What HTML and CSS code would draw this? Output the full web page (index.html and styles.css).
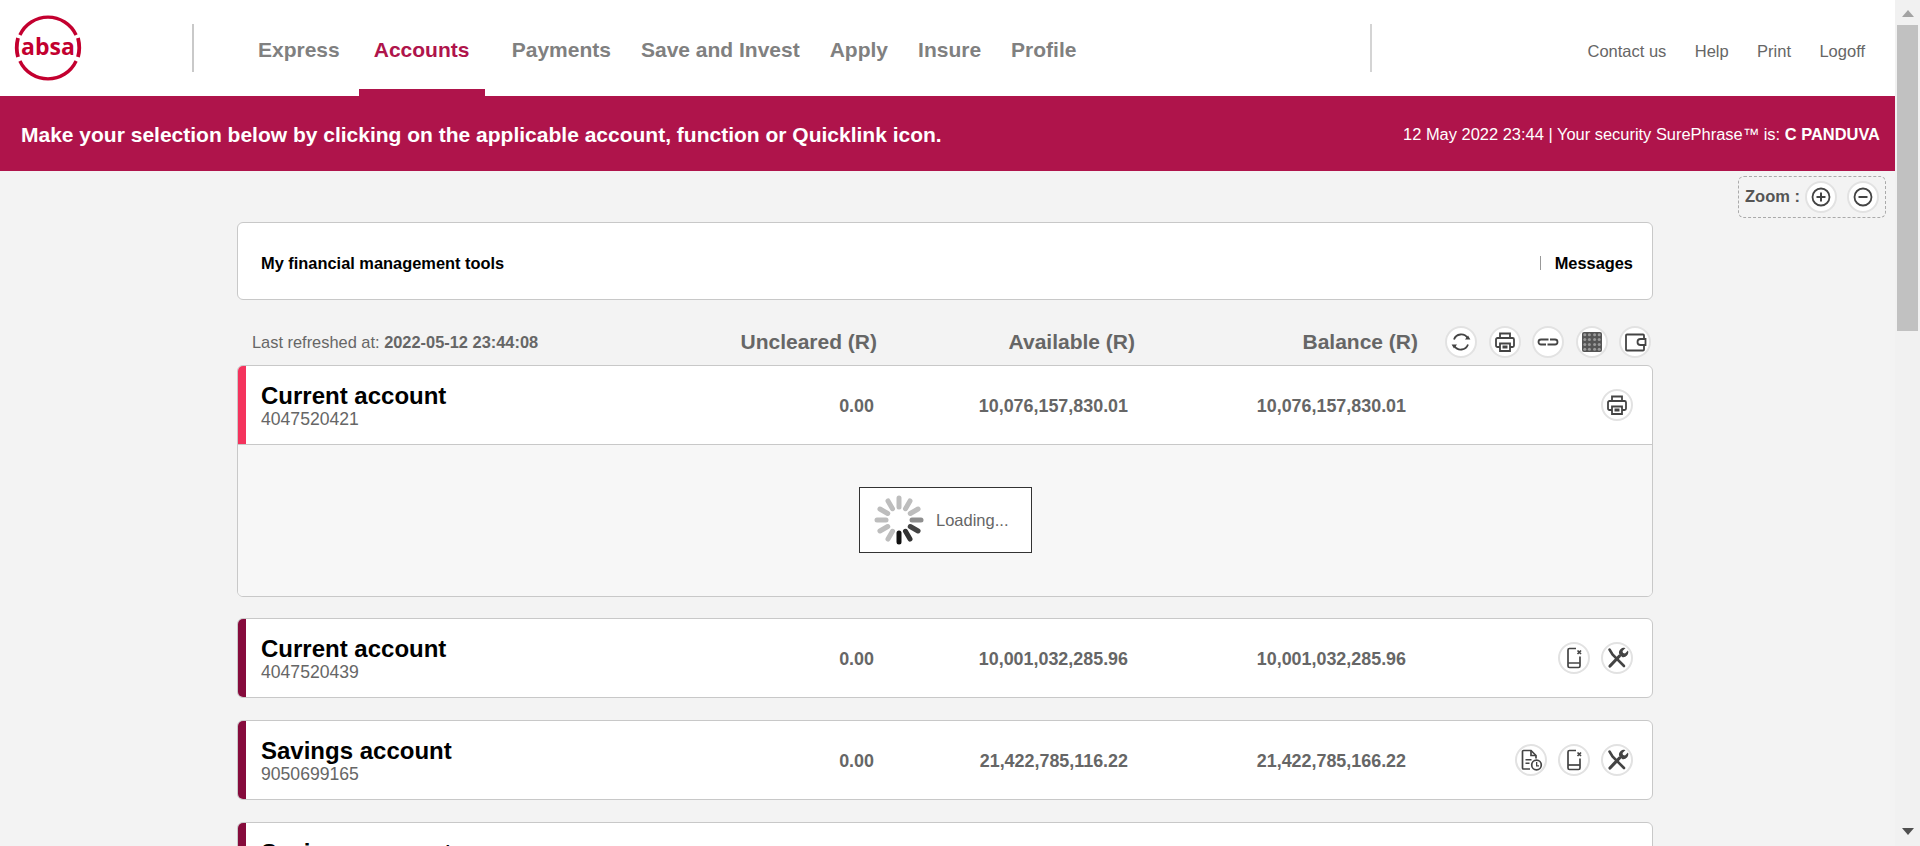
FILE: index.html
```html
<!DOCTYPE html>
<html lang="en">
<head>
<meta charset="utf-8">
<title>Absa Online</title>
<link rel="stylesheet" href="styles.css">
</head>
<body>
<svg class="sprite" aria-hidden="true">
  <symbol id="i-refresh" viewBox="0 0 24 24"><path d="M5 9.5A7.6 7.6 0 0 1 18.6 8M19 14.5A7.6 7.6 0 0 1 5.4 16" fill="none" stroke="currentColor" stroke-width="1.8"/><path d="M16 9.4h5.4L19 5.6zM8 14.6H2.6L5 18.4z" fill="currentColor"/></symbol>
  <symbol id="i-print" viewBox="0 0 24 24"><g fill="none" stroke="currentColor" stroke-width="1.8"><path d="M7 8V3.5h10V8"/><path d="M7 17H4.5A1.5 1.5 0 0 1 3 15.500V9.500A1.500 1.500 0 0 1 4.500 8h15A1.500 1.500 0 0 1 21 9.500v6a1.500 1.500 0 0 1-1.500 1.500H17"/><path d="M7 13.500h10v7.500H7z"/></g><path d="M9.500 15.500h5v3h-5z" fill="currentColor"/></symbol>
  <symbol id="i-link" viewBox="0 0 24 24"><g fill="none" stroke="currentColor" stroke-width="1.800"><path d="M10 14.500H5a2.500 2.500 0 0 1 0-5h7.500"/><path d="M14 9.500h5a2.500 2.500 0 0 1 0 5h-7.500"/></g></symbol>
  <symbol id="i-grid" viewBox="0 0 24 24"><rect x="2" y="2" width="20" height="20" rx="2" fill="#555"/><g fill="#999"><circle cx="4.800" cy="4.800" r="1.500"/><circle cx="9.400" cy="4.800" r="1.500"/><circle cx="14.600" cy="4.800" r="1.500"/><circle cx="19.200" cy="4.800" r="1.500"/><circle cx="4.800" cy="9.400" r="1.500"/><circle cx="9.400" cy="9.400" r="1.500"/><circle cx="14.600" cy="9.400" r="1.500"/><circle cx="19.200" cy="9.400" r="1.500"/><circle cx="4.800" cy="14.600" r="1.500"/><circle cx="9.400" cy="14.600" r="1.500"/><circle cx="14.600" cy="14.600" r="1.500"/><circle cx="19.200" cy="14.600" r="1.500"/><circle cx="4.800" cy="19.200" r="1.500"/><circle cx="9.400" cy="19.200" r="1.500"/><circle cx="14.600" cy="19.200" r="1.500"/><circle cx="19.200" cy="19.200" r="1.500"/></g></symbol>
  <symbol id="i-wallet" viewBox="0 0 24 24"><g fill="none" stroke="currentColor" stroke-width="1.800"><path d="M21 8.500V5.500a1 1 0 0 0-1-1H4a1 1 0 0 0-1 1v14a1 1 0 0 0 1 1h16a1 1 0 0 0 1-1v-4"/><path d="M21 9h-3.500a3 3 0 0 0 0 6H22.500V9z"/></g></symbol>
  <symbol id="i-phone" viewBox="0 0 24 24"><g fill="none" stroke="currentColor" stroke-width="1.700"><path d="M14 2.500H7.500A1.500 1.500 0 0 0 6 4v16a1.500 1.500 0 0 0 1.500 1.500h9A1.500 1.500 0 0 0 18 20V10.500"/><path d="M6 17h12"/><path d="M15.500 4.500l3.500 3.500M19 4.500l-3.500 3.500"/></g></symbol>
  <symbol id="i-tools" viewBox="0 0 24 24"><g fill="none" stroke="currentColor" stroke-linecap="round"><path d="M4.500 3.500l3 5 11.500 11.500" stroke-width="2.600"/><path d="M5 20l9.500-10" stroke-width="3.200"/></g><path d="M14 7.500a5 5 0 0 1 6.500-5.500l-3 3 .5 2 2 .5 3-3a5 5 0 0 1-6 6.500z" fill="currentColor"/></symbol>
  <symbol id="i-doc" viewBox="0 0 24 24"><g fill="none" stroke="currentColor" stroke-width="1.700"><path d="M11 21H4.500a1 1 0 0 1-1-1V3.500a1 1 0 0 1 1-1H12l5 5v3"/><path d="M12 2.500v5h5"/><circle cx="17.500" cy="17" r="4.800"/></g><path d="M6.500 11h6v1.600h-6zM6.500 14.500h4v1.600h-4zM17 14h1.300v3.200H20v1.200h-3z" fill="currentColor"/></symbol>
  <symbol id="i-plus" viewBox="0 0 24 24"><circle cx="12" cy="12" r="8.500" fill="none" stroke="currentColor" stroke-width="1.800"/><path d="M12 7.500v9M7.500 12h9" stroke="currentColor" stroke-width="2"/></symbol>
  <symbol id="i-minus" viewBox="0 0 24 24"><circle cx="12" cy="12" r="8.500" fill="none" stroke="currentColor" stroke-width="1.800"/><path d="M7.500 12h9" stroke="currentColor" stroke-width="2"/></symbol>
</svg>

<div class="app">
  <div class="page">
    <header class="topbar">
      <div class="brand">
        <svg class="logo" viewBox="0 0 66 66" role="img" aria-label="Absa logo">
          <g fill="none" stroke="#c3002f" stroke-width="3.400">
            <path d="M4.900 20A31 31 0 0 1 61.100 20"/>
            <path d="M4.900 46A31 31 0 0 0 61.100 46"/>
            <path d="M3 23Q.5 33 3 42" stroke-width="3.800"/>
            <path d="M63 23Q65.500 33 63 42" stroke-width="3.800"/>
          </g>
          <text class="logo-text" x="33" y="40" text-anchor="middle">absa</text>
        </svg>
      </div>
      <nav class="mainnav">
        <a class="nav-item nav-express">Express</a>
        <a class="nav-item nav-active">Accounts</a>
        <a class="nav-item">Payments</a>
        <a class="nav-item">Save and Invest</a>
        <a class="nav-item">Apply</a>
        <a class="nav-item">Insure</a>
        <a class="nav-item">Profile</a>
      </nav>
      <nav class="utilnav">
        <a>Contact us</a>
        <a>Help</a>
        <a>Print</a>
        <a>Logoff</a>
      </nav>
    </header>

    <div class="band">
      <strong class="band-msg">Make your selection below by clicking on the applicable account, function or Quicklink icon.</strong>
      <span class="band-info">12 May 2022 23:44 | Your security SurePhrase™ is: <b>C PANDUVA</b></span>
    </div>

    <div class="zoom-row">
      <div class="zoom-box">
        <b class="zoom-label">Zoom :</b>
        <span class="ico"><svg><use href="#i-plus"/></svg></span>
        <span class="ico"><svg><use href="#i-minus"/></svg></span>
      </div>
    </div>

    <main class="content">
      <section class="tools-card">
        <b>My financial management tools</b>
        <b class="messages">Messages</b>
      </section>

      <div class="head-row">
        <div class="refreshed">Last refreshed at: <b>2022-05-12 23:44:08</b></div>
        <div class="col-head">Uncleared (R)</div>
        <div class="col-head">Available (R)</div>
        <div class="col-head">Balance (R)</div>
        <div class="icons icons-head">
          <span class="ico"><svg><use href="#i-refresh"/></svg></span>
          <span class="ico"><svg><use href="#i-print"/></svg></span>
          <span class="ico"><svg><use href="#i-link"/></svg></span>
          <span class="ico"><svg><use href="#i-grid"/></svg></span>
          <span class="ico"><svg><use href="#i-wallet"/></svg></span>
        </div>
      </div>

      <article class="account account-expanded">
        <div class="acc-row acc-open">
          <div class="acc-name"><h2>Current account</h2><p>4047520421</p></div>
          <div class="val">0.00</div>
          <div class="val">10,076,157,830.01</div>
          <div class="val">10,076,157,830.01</div>
          <div class="icons"><span class="ico"><svg><use href="#i-print"/></svg></span></div>
        </div>
        <div class="acc-panel">
          <div class="loading">
            <svg class="spinner" viewBox="-25 -25 50 50" aria-hidden="true">
              <g stroke-width="5" stroke-linecap="round">
                <line class="b0" y1="-13" y2="-22"/>
                <line class="b0" y1="-13" y2="-22" transform="rotate(30)"/>
                <line class="b0" y1="-13" y2="-22" transform="rotate(60)"/>
                <line class="b1" y1="-13" y2="-22" transform="rotate(90)"/>
                <line class="b2" y1="-13" y2="-22" transform="rotate(120)"/>
                <line class="b3" y1="-13" y2="-22" transform="rotate(150)"/>
                <line class="b4" y1="-13" y2="-22" transform="rotate(180)"/>
                <line class="b0" y1="-13" y2="-22" transform="rotate(210)"/>
                <line class="b0" y1="-13" y2="-22" transform="rotate(240)"/>
                <line class="b0" y1="-13" y2="-22" transform="rotate(270)"/>
                <line class="b0" y1="-13" y2="-22" transform="rotate(300)"/>
                <line class="b0" y1="-13" y2="-22" transform="rotate(330)"/>
              </g>
            </svg>
            <span>Loading...</span>
          </div>
        </div>
      </article>

      <article class="account">
        <div class="acc-row">
          <div class="acc-name"><h2>Current account</h2><p>4047520439</p></div>
          <div class="val">0.00</div>
          <div class="val">10,001,032,285.96</div>
          <div class="val">10,001,032,285.96</div>
          <div class="icons">
            <span class="ico"><svg><use href="#i-phone"/></svg></span>
            <span class="ico"><svg><use href="#i-tools"/></svg></span>
          </div>
        </div>
      </article>

      <article class="account">
        <div class="acc-row">
          <div class="acc-name"><h2>Savings account</h2><p>9050699165</p></div>
          <div class="val">0.00</div>
          <div class="val">21,422,785,116.22</div>
          <div class="val">21,422,785,166.22</div>
          <div class="icons">
            <span class="ico"><svg><use href="#i-doc"/></svg></span>
            <span class="ico"><svg><use href="#i-phone"/></svg></span>
            <span class="ico"><svg><use href="#i-tools"/></svg></span>
          </div>
        </div>
      </article>

      <article class="account">
        <div class="acc-row">
          <div class="acc-name"><h2>Savings account</h2><p>&nbsp;</p></div>
        </div>
      </article>
    </main>
  </div>

  <div class="scrollbar" aria-hidden="true">
    <div class="arrow-up"></div>
    <div class="thumb"></div>
    <div class="arrow-down"></div>
  </div>
</div>
</body>
</html>
```

FILE: styles.css
```css
* { box-sizing: border-box; }
html, body { margin: 0; height: 846px; overflow: hidden; }
body { font-family: "Liberation Sans", Arial, sans-serif; color: #666; background: #f3f3f3; }
.sprite { display: none; }

.app { display: flex; height: 846px; overflow: hidden; }
.page { flex: 1; min-width: 0; }

/* header */
.topbar { height: 96px; background: #fff; display: flex; align-items: center; }
.brand { width: 194px; height: 48px; border-right: 2px solid #c9c9c9; padding-left: 15px; display: flex; align-items: center; }
.logo { width: 66px; height: 66px; flex: none; overflow: visible; }
.logo-text { font-family: "Open Sans", sans-serif; font-weight: 700; font-size: 23px; fill: #c3002f; }
.mainnav { width: 1178px; height: 96px; display: flex; padding-left: 48px; position: relative; }
.mainnav::after { content: ""; position: absolute; right: 0; top: 24px; height: 48px; width: 2px; background: #d4d4d4; }
.nav-item { padding: 0 15px; height: 96px; line-height: 100px; font-size: 21px; font-weight: 700; color: #808080; }
.nav-express { padding-left: 16px; margin-right: 4px; }
.nav-active { color: #af144b; margin-right: 12px; box-shadow: inset 0 -7px 0 #af144b; width: 126px; }
.utilnav { flex: 1; display: flex; justify-content: flex-end; padding-right: 30px; gap: 28.400px; font-size: 16.500px; color: #666; padding-top: 6px; }

/* red band */
.band { height: 75px; background: #af144b; color: #fff; display: flex; justify-content: space-between; align-items: center; padding: 2px 15px 0 21px; }
.band-msg { font-size: 21px; }
.band-info { font-size: 16.450px; }

/* zoom */
.zoom-row { display: flex; justify-content: flex-end; padding: 5px 9px 0 0; }
.zoom-box { width: 148px; height: 42px; border: 1px dashed #aaa; border-radius: 6px; display: flex; align-items: center; gap: 5px; padding-left: 6px; font-size: 16.500px; color: #555; }
.zoom-label { padding-bottom: 2px; }
.zoom-box .ico + .ico { margin-left: 5px; }

/* content */
.content { margin: 4px 0 0 237px; width: 1416px; }
.tools-card { height: 78px; background: #fff; border: 1px solid #c8c8c8; border-radius: 6px; display: flex; align-items: center; justify-content: space-between; padding: 4px 19px 0 23px; font-size: 16.400px; color: #000; }
.messages { border-left: 1px solid #999; padding-left: 14px; line-height: 14px; }

.head-row { height: 65px; display: grid; grid-template-columns: 478px 147px 258px 283px 1fr; align-items: center; padding: 19px 0 0 15px; font-size: 16.400px; }
.refreshed { color: #666; white-space: nowrap; }
.col-head { font-size: 21px; font-weight: 700; color: #666; text-align: right; white-space: nowrap; }
.icons { display: flex; justify-content: flex-end; gap: 11px; }
.icons-head { padding-right: 2px; gap: 11.500px; }

.ico { width: 32px; height: 32px; border-radius: 50%; background: #fff; border: 2px solid #e2e2e2; color: #444; display: flex; align-items: center; justify-content: center; flex: none; }
.ico svg { width: 24px; height: 24px; display: block; }

.account { background: #fff; border: 1px solid #c8c8c8; border-radius: 6px; overflow: hidden; margin-bottom: 22px; }
.account-expanded { margin-bottom: 21px; }
.acc-row { height: 78px; border-left: 8px solid #860b3c; display: grid; grid-template-columns: 400px 213px 254px 278px 1fr; align-items: center; padding: 0 19px 0 15px; }
.acc-open { border-left-color: #f4335d; }
.acc-name { padding-top: 6px; }
.acc-name h2 { margin: 0; font-size: 24px; line-height: 22px; font-weight: 700; color: #000; white-space: nowrap; }
.acc-name p { margin: 0; font-size: 17.600px; line-height: 24px; color: #666; }
.val { font-size: 17.900px; font-weight: 700; color: #666; text-align: right; padding-top: 3px; }

.acc-panel { height: 152px; background: #f7f7f7; border-top: 1px solid #c8c8c8; padding: 42px 0 0 1px; }
.loading { width: 173px; height: 66px; margin: 0 auto; background: #fff; border: 1px solid #333; display: flex; align-items: center; gap: 12px; padding-left: 14px; font-size: 16.500px; color: #666; }
.spinner { width: 50px; height: 50px; flex: none; }
.b0 { stroke: #bdbdbd; }
.b1 { stroke: #8f8f8f; }
.b2 { stroke: #444; }
.b3 { stroke: #333; }
.b4 { stroke: #111; }

/* scrollbar */
.scrollbar { width: 25px; height: 846px; background: #f1f1f1; padding: 0 2px; flex: none; }
.arrow-up { width: 0; height: 0; margin: 10px auto 8px; border-left: 6px solid transparent; border-right: 6px solid transparent; border-bottom: 7px solid #a3a3a3; }
.thumb { height: 306px; background: #c1c1c1; }
.arrow-down { width: 0; height: 0; margin: 497px auto 0; border-left: 6px solid transparent; border-right: 6px solid transparent; border-top: 7px solid #505050; }
```
